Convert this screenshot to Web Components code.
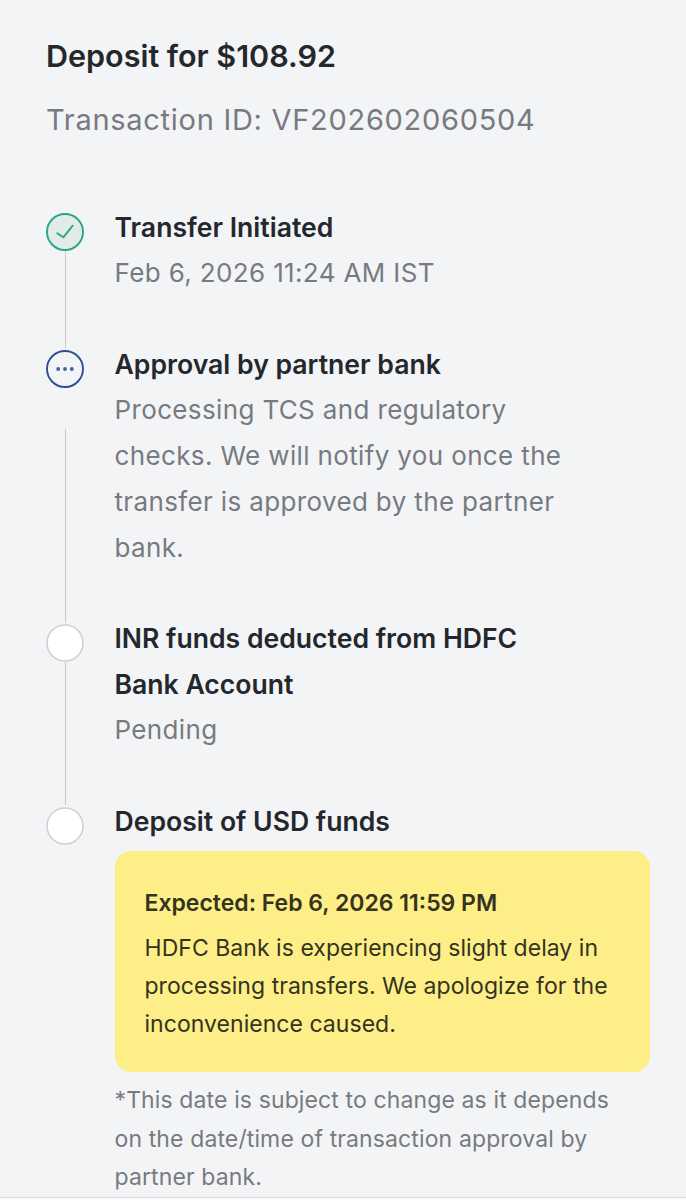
<!DOCTYPE html>
<html>
<head>
<meta charset="utf-8">
<style>
  html { background: linear-gradient(#f3f4f6 1197px, #dcdde0 1197px, #dcdde0 1198px, #fbfbfc 1198px); }
  html, body { margin: 0; padding: 0; height: 1200px; overflow: hidden; }
  body { font-family: Inter, "Liberation Sans", sans-serif; }
</style>
</head>
<body>
<deposit-page>
  <span slot="title">Deposit for $108.92</span>
  <span slot="txn">Transaction ID: VF202602060504</span>
  <timeline-step state="done" line="full">
    <span slot="head">Transfer Initiated</span>
    Feb 6, 2026 11:24 AM IST
  </timeline-step>
  <timeline-step state="active" line="gap">
    <span slot="head">Approval by partner bank</span>
    Processing TCS and regulatory<br>checks. We will notify you once the<br>transfer is approved by the partner<br>bank.
  </timeline-step>
  <timeline-step line="full">
    <span slot="head">INR funds deducted from HDFC<br>Bank Account</span>
    Pending
  </timeline-step>
  <timeline-step>
    <span slot="head">Deposit of USD funds</span>
    <notice-box slot="extra">
      <span slot="head">Expected: Feb 6, 2026 11:59 PM</span>
      HDFC Bank is experiencing slight delay in<br>processing transfers. We apologize for the<br>inconvenience caused.
    </notice-box>
    <span slot="foot">*This date is subject to change as it depends<br>on the date/time of transaction approval by<br>partner bank.</span>
  </timeline-step>
</deposit-page>
<script>
class DepositPage extends HTMLElement {
    constructor() {
        super();
        this.attachShadow({ mode: 'open' });
        this.shadowRoot.innerHTML = `
          <style>
            :host { display: block; padding: 38px 36px 0 46px; color: #24272c; }
            .title { font-size: 30.5px; line-height: 36px; font-weight: 600; }
            .txn { font-size: 29px; line-height: 40px; margin-top: 26px; color: #777a80; letter-spacing: .72px; }
            .steps { margin-top: 73px; display: flex; flex-direction: column; }
          </style>
          <div class="title"><slot name="title"></slot></div>
          <div class="txn"><slot name="txn"></slot></div>
          <div class="steps"><slot></slot></div>
        `;
    }
}

class TimelineStep extends HTMLElement {
    constructor() {
        super();
        this.attachShadow({ mode: 'open' });
        const state = this.getAttribute('state');
        let icon = '';
        if (state === 'done') {
            icon = `<svg width="38" height="38" viewBox="0 0 38 38"><circle cx="19" cy="19" r="18" fill="#e3ebe8" stroke="#2ba583" stroke-width="1.9"/><path d="M11.3 20.3l6 4 9.4-11.6" fill="none" stroke="#2ba583" stroke-width="1.9" stroke-linecap="round" stroke-linejoin="round"/></svg>`;
        } else if (state === 'active') {
            icon = `<svg width="38" height="38" viewBox="0 0 38 38"><circle cx="19" cy="19" r="18" fill="#f3f4f6" stroke="#2f4f93" stroke-width="1.9"/><circle cx="12.2" cy="19" r="1.9" fill="#3f5f9f"/><circle cx="19" cy="19" r="1.9" fill="#3f5f9f"/><circle cx="25.8" cy="19" r="1.9" fill="#3f5f9f"/></svg>`;
        } else {
            icon = `<svg width="38" height="38" viewBox="0 0 38 38"><circle cx="19" cy="19" r="18" fill="#fff" stroke="#cfd0d3" stroke-width="1.6"/></svg>`;
        }
        this.shadowRoot.innerHTML = `
          <style>
            :host { display: grid; grid-template-columns: 38px 1fr; column-gap: 30.5px; padding-bottom: 53.7px; position: relative; }
            :host(:last-child) { padding-bottom: 0; }
            .rail { position: relative; }
            .dot { position: relative; z-index: 1; height: 38px; }
            .dot svg { display: block; }
            .line { position: absolute; left: 18.7px; width: 1.6px; bottom: -52px; top: 38px; background: #c9cacd; }
            .line.gap { top: 79px; }
            .head { font-size: 26.6px; line-height: 46px; font-weight: 600; margin-top: -9px; color: #24272c; }
            .body { font-size: 26px; line-height: 46px; color: #777a80; letter-spacing: .36px; }
            ::slotted(notice-box) { margin-top: 7px; }
            ::slotted([slot="foot"]) { display: block; margin-top: 9px; }
            .foot { font-size: 23px; line-height: 38.5px; color: #777a80; letter-spacing: .12px; }
          </style>
          <div class="rail">
            <div class="dot">${icon}</div>
            ${this.getAttribute('line') ? `<div class="line ${this.getAttribute('line')}"></div>` : ''}
          </div>
          <div>
            <div class="head"><slot name="head"></slot></div>
            <div class="body"><slot></slot></div>
            <slot name="extra"></slot>
            <div class="foot"><slot name="foot"></slot></div>
          </div>
        `;
    }
}

class NoticeBox extends HTMLElement {
    constructor() {
        super();
        this.attachShadow({ mode: 'open' });
        this.shadowRoot.innerHTML = `
          <style>
            :host { display: block; background: #fdee88; border-radius: 16px; padding: 33px 30px 29px; color: #33331f; }
            .head { font-size: 23px; line-height: 38px; font-weight: 600; margin-bottom: 7px; }
            .body { font-size: 23px; line-height: 38px; letter-spacing: .04px; }
          </style>
          <div class="head"><slot name="head"></slot></div>
          <div class="body"><slot></slot></div>
        `;
    }
}

customElements.define('deposit-page', DepositPage);
customElements.define('timeline-step', TimelineStep);
customElements.define('notice-box', NoticeBox);
</script>
</body>
</html>
